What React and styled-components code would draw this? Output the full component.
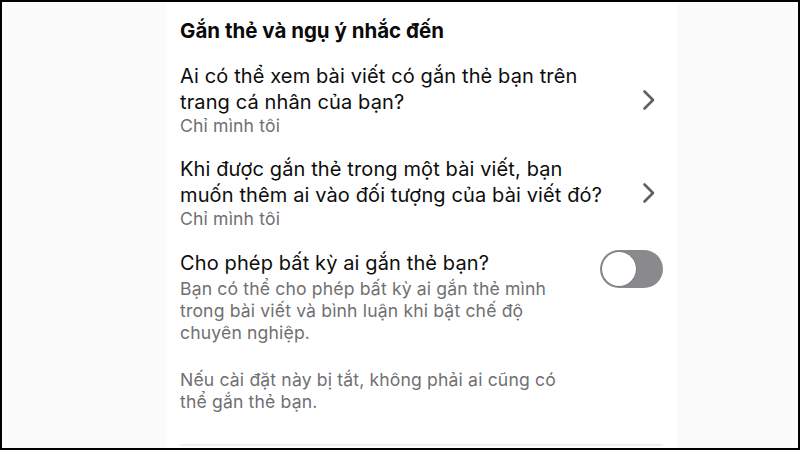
import React from 'react'
import styled, { createGlobalStyle } from 'styled-components'

const Global = createGlobalStyle`
  html, body { margin: 0; padding: 0; background: #fbfbfb; }
  body { font-family: Inter, "Noto Sans", "Liberation Sans", sans-serif; -webkit-font-smoothing: antialiased; }
`

const Frame = styled.div`
  box-sizing: border-box;
  width: 800px;
  height: 450px;
  border: 2px solid #000;
  display: flex;
  background: #fbfbfb;
  overflow: hidden;
`

const Side = styled.div`
  width: ${p => p.$w}px;
  flex-shrink: 0;
`

const Panel = styled.main`
  width: 511px;
  background: #fff;
  padding: 17px 14px 0;
  box-sizing: border-box;
  display: flex;
  flex-direction: column;
`

const Heading = styled.h2`
  margin: 0;
  font-size: 20.5px;
  line-height: 24px;
  font-weight: 700;
  color: #0a0a0a;
`

const Item = styled.div`
  display: flex;
  align-items: ${p => (p.$top ? 'flex-start' : 'center')};
  justify-content: space-between;
  margin-top: ${p => p.$gap}px;
`

const Texts = styled.div`
  display: flex;
  flex-direction: column;
`

const Title = styled.div`
  font-size: 20px;
  line-height: 26px;
  color: #0d0d0d;
  white-space: nowrap;
  letter-spacing: 0.12px;
`

const Sub = styled.div`
  font-size: 17.6px;
  line-height: 22px;
  color: #707073;
  white-space: nowrap;
  letter-spacing: 0.15px;
  margin-top: ${p => p.$gap || 0}px;
`

const Chevron = styled.svg`
  width: 14px;
  height: 22px;
  margin-right: 7px;
  flex-shrink: 0;
`

const Toggle = styled.div`
  width: 63px;
  height: 38px;
  border-radius: 19px;
  background: #8a8a8e;
  position: relative;
  flex-shrink: 0;
`

const Knob = styled.span`
  position: absolute;
  left: 2px;
  top: 2px;
  width: 34px;
  height: 34px;
  border-radius: 50%;
  background: #fff;
  box-shadow: 0 0 0 0.5px rgba(0, 0, 0, 0.2);
`

const Divider = styled.hr`
  margin: auto 0 2px;
  border: 0;
  height: 2px;
  background: #efeff0;
`

const Arrow = () => (
  <Chevron viewBox="0 0 14 22">
    <path d="M2.5 2.5 L11 11 L2.5 19.5" fill="none" stroke="#5f5f63" strokeWidth="2.6" strokeLinecap="round" strokeLinejoin="round" />
  </Chevron>
)

export default function App() {
  return (
    <>
      <Global />
      <Frame>
        <Side $w={164} />
        <Panel>
          <Heading>Gắn thẻ và ngụ ý nhắc đến</Heading>
          <Item $gap={20}>
            <Texts>
              <Title>Ai có thể xem bài viết có gắn thẻ bạn trên<br />trang cá nhân của bạn?</Title>
              <Sub>Chỉ mình tôi</Sub>
            </Texts>
            <Arrow />
          </Item>
          <Item $gap={19}>
            <Texts>
              <Title>Khi được gắn thẻ trong một bài viết, bạn<br />muốn thêm ai vào đối tượng của bài viết đó?</Title>
              <Sub>Chỉ mình tôi</Sub>
            </Texts>
            <Arrow />
          </Item>
          <Item $gap={20} $top>
            <Texts>
              <Title>Cho phép bất kỳ ai gắn thẻ bạn?</Title>
              <Sub $gap={2}>Bạn có thể cho phép bất kỳ ai gắn thẻ mình<br />trong bài viết và bình luận khi bật chế độ<br />chuyên nghiệp.</Sub>
              <Sub $gap={25}>Nếu cài đặt này bị tắt, không phải ai cũng có<br />thể gắn thẻ bạn.</Sub>
            </Texts>
            <Toggle><Knob /></Toggle>
          </Item>
          <Divider />
        </Panel>
        <Side $w={121} />
      </Frame>
    </>
  )
}
